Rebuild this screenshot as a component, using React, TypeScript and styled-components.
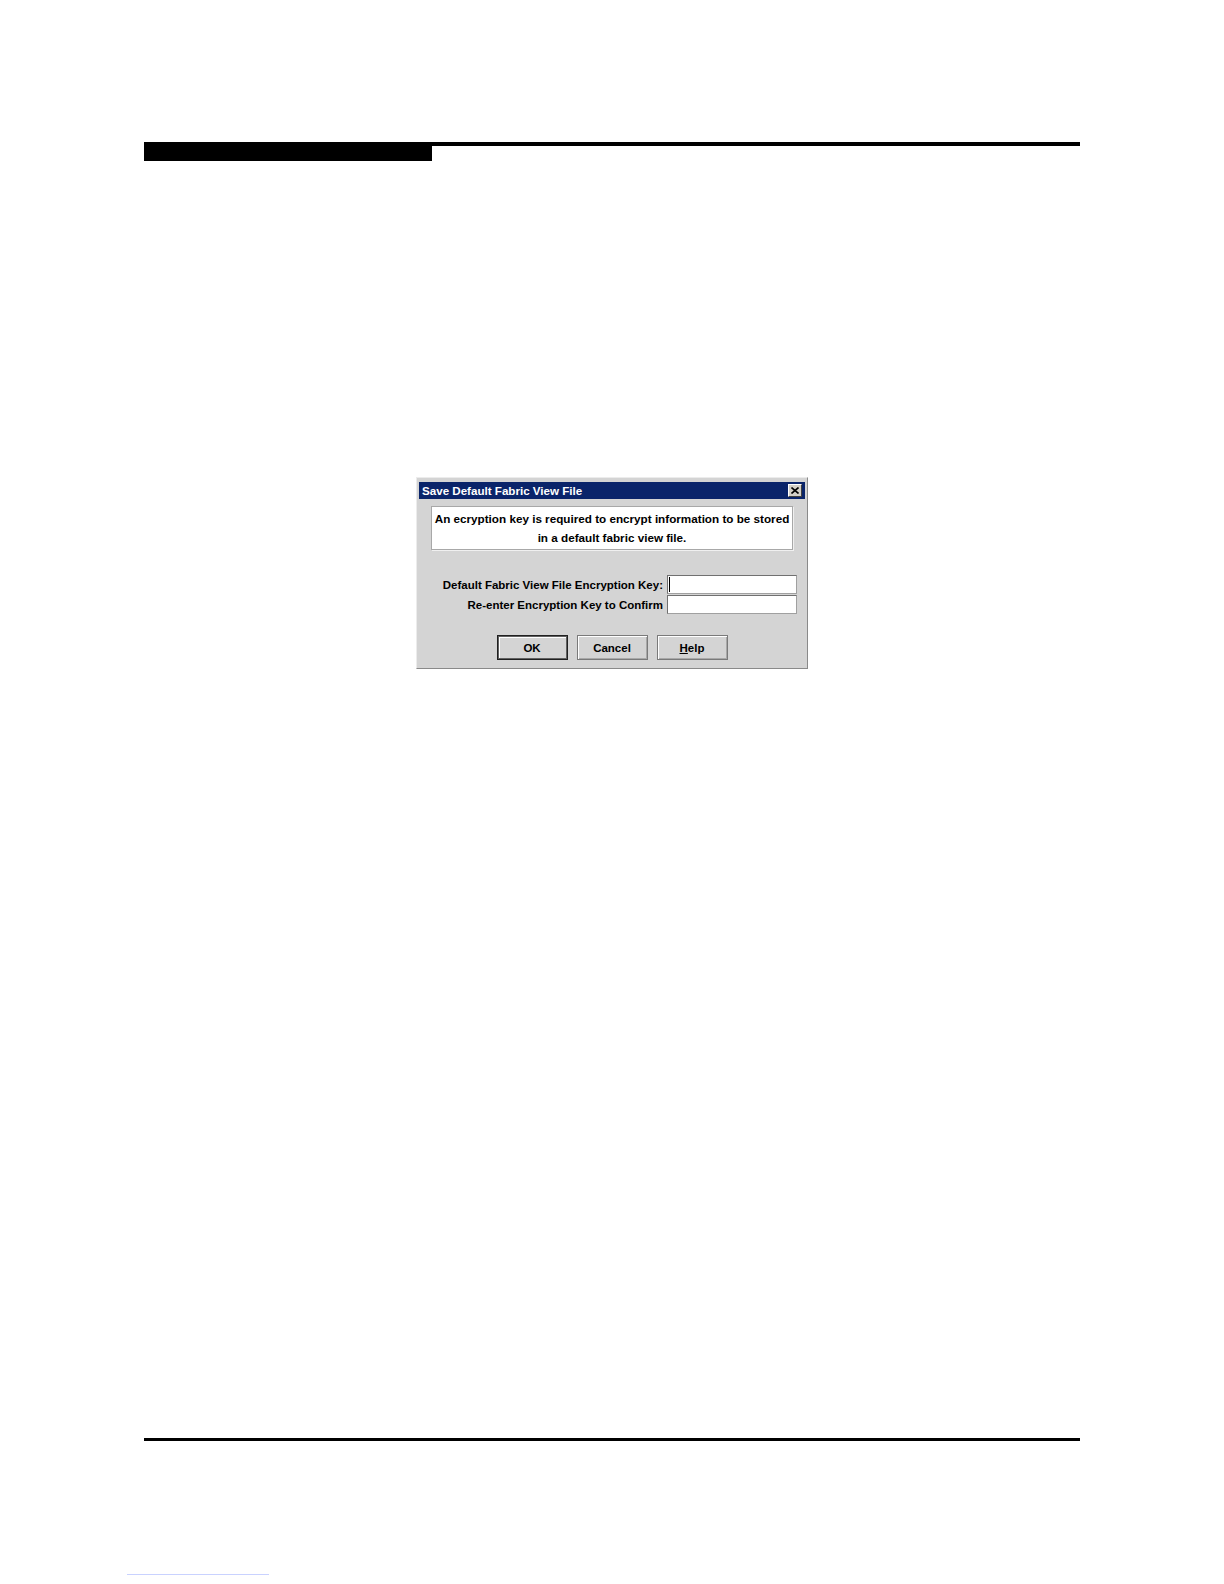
import React from "react";
import styled, { createGlobalStyle } from "styled-components";

const Global = createGlobalStyle`
  html, body { margin: 0; padding: 0; background: #ffffff; }
  body { font-family: "Liberation Sans", Arial, sans-serif; }
  * { box-sizing: border-box; }
`;

const Page = styled.div`
  width: 1224px;
  height: 1584px;
  padding-top: 142px;
  display: flex;
  flex-direction: column;
  overflow: hidden;
`;

const HeaderRule = styled.div`
  margin-left: 144px;
  width: 936px;
  border-top: 4px solid #000;
`;

const HeaderTab = styled.div`
  width: 288px;
  height: 15px;
  background: #000;
`;

const Dialog = styled.div`
  margin-top: 316px;
  margin-left: 416px;
  width: 392px;
  height: 192px;
  background: #d4d4d4;
  border: 1px solid;
  border-color: #ececec #8a8a8a #8a8a8a #ececec;
  padding: 4px 2px 2px 2px;
  display: flex;
  flex-direction: column;
  font-family: "Liberation Sans", Arial, sans-serif;
  font-weight: bold;
  font-size: 11.5px;
  color: #000;
`;

const TitleBar = styled.div`
  height: 17px;
  background: #0a246a;
  display: flex;
  align-items: center;
  justify-content: space-between;
  padding: 0 3px 0 3px;
  color: #fff;
  font-size: 11.6px;
  font-weight: bold;
`;

const CloseButton = styled.div`
  width: 14px;
  height: 13px;
  background: #d4d0c8;
  border: 1px solid;
  border-color: #ffffff #404040 #404040 #ffffff;
  display: flex;
  align-items: center;
  justify-content: center;
`;

const Body = styled.div`
  flex: 1;
  display: flex;
  flex-direction: column;
  padding: 7px 0 0 0;
`;

const Message = styled.div`
  margin: 0 12px;
  height: 44px;
  background: #fff;
  border: 1px solid #a8a8a8;
  box-shadow: 1px 1px 0 #f0f0f0;
  display: flex;
  flex-direction: column;
  align-items: center;
  justify-content: center;
  line-height: 19px;
  font-size: 11.7px;
  text-align: center;
`;

const Form = styled.div`
  margin-top: 25px;
  margin-right: 8px;
  display: grid;
  grid-template-columns: auto 130px;
  justify-content: end;
  column-gap: 4px;
  row-gap: 1px;
  align-items: center;
`;

const Label = styled.div`
  text-align: right;
  white-space: nowrap;
`;

const Field = styled.div`
  height: 19px;
  background: #fff;
  border: 1px solid;
  border-color: #707070 #a0a0a0 #a0a0a0 #707070;
  display: flex;
  align-items: center;
  padding-left: 1px;
`;

const Caret = styled.span`
  width: 1px;
  height: 15px;
  background: #000;
`;

const Buttons = styled.div`
  margin-top: 21px;
  display: flex;
  justify-content: center;
  gap: 9px;
`;

const Button = styled.div<{ $default?: boolean }>`
  width: 71px;
  height: 25px;
  display: flex;
  align-items: center;
  justify-content: center;
  background: #d4d4d4;
  border: 1px solid ${(p) => (p.$default ? "#202020" : "#7a7a7a")};
  box-shadow: ${(p) =>
    p.$default
      ? "inset 1px 1px 0 #606060, inset -1px -1px 0 #606060, inset 2px 2px 0 #fff"
      : "inset 1px 1px 0 #ffffff, inset -1px -1px 0 #a8a8a8"};
`;

const Mnemonic = styled.span`
  text-decoration: underline;
`;

const FooterRule = styled.div`
  margin-top: 769px;
  margin-left: 144px;
  width: 936px;
  border-top: 3px solid #000;
`;

const FooterLink = styled.div`
  margin-top: 133px;
  margin-left: 127px;
  width: 142px;
  border-top: 1px solid #c9d2ff;
`;

export default function App() {
  return (
    <>
      <Global />
      <Page>
        <HeaderRule>
          <HeaderTab />
        </HeaderRule>
        <Dialog>
          <TitleBar>
            <span>Save Default Fabric View File</span>
            <CloseButton>
              <svg width="8" height="7" viewBox="0 0 8 7">
                <path d="M0.5 0.5 L7.5 6.5 M7.5 0.5 L0.5 6.5" stroke="#000" strokeWidth="1.6" />
              </svg>
            </CloseButton>
          </TitleBar>
          <Body>
            <Message>
              <span>An ecryption key is required to encrypt information to be stored</span>
              <span>in a default fabric view file.</span>
            </Message>
            <Form>
              <Label>Default Fabric View File Encryption Key:</Label>
              <Field>
                <Caret />
              </Field>
              <Label>Re-enter Encryption Key to Confirm</Label>
              <Field />
            </Form>
            <Buttons>
              <Button $default>OK</Button>
              <Button>Cancel</Button>
              <Button>
                <span>
                  <Mnemonic>H</Mnemonic>elp
                </span>
              </Button>
            </Buttons>
          </Body>
        </Dialog>
        <FooterRule />
        <FooterLink />
      </Page>
    </>
  );
}
